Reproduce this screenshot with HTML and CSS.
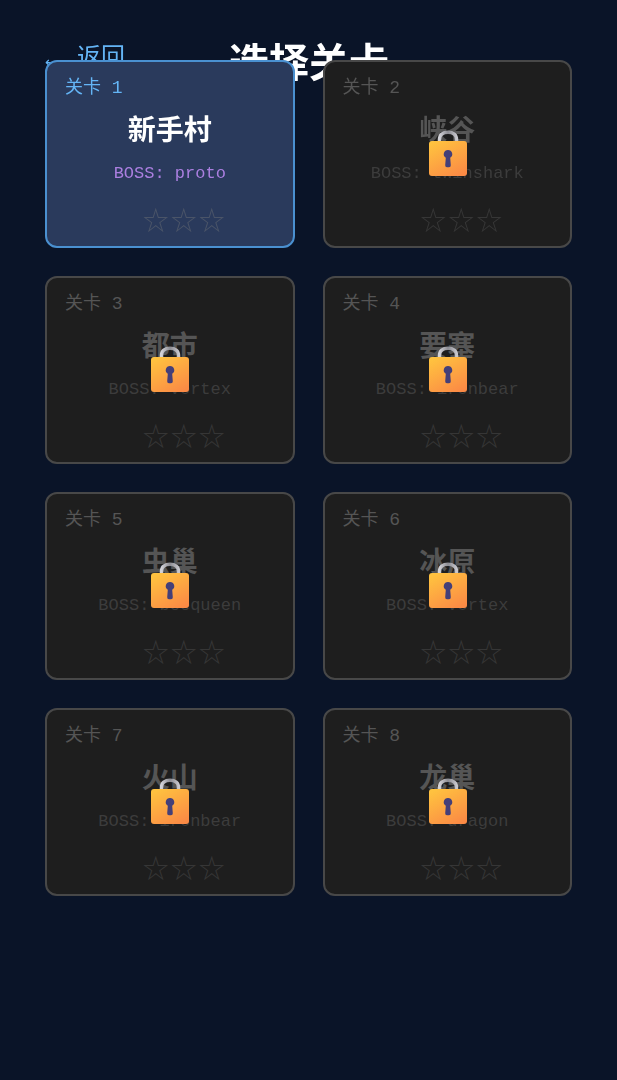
FILE: index.html
```html
<!DOCTYPE html>
<html lang="zh">
<head>
<meta charset="utf-8">
<title>选择关卡</title>
<link rel="stylesheet" href="styles.css">
</head>
<body>
<svg class="defs" width="0" height="0" aria-hidden="true">
  <defs>
    <linearGradient id="lockBody" x1="0.2" y1="0" x2="0.8" y2="1">
      <stop offset="0" stop-color="#ffc23f"/>
      <stop offset="1" stop-color="#fb8a45"/>
    </linearGradient>
    <linearGradient id="lockBar" x1="0" y1="0" x2="1" y2="0">
      <stop offset="0" stop-color="#d2d2d8"/>
      <stop offset="0.5" stop-color="#8c8c92"/>
      <stop offset="1" stop-color="#c6c6cc"/>
    </linearGradient>
    <symbol id="lock" viewBox="0 0 38 46">
      <path d="M10.500 13V9.500C10.500 5 14 2.200 19 2.200s8.500 2.800 8.500 7.300V13" fill="none" stroke="url(#lockBar)" stroke-width="3.500"/>
      <rect x="0" y="11" width="38" height="35" rx="3" fill="url(#lockBody)"/>
      <path d="M19 20a4.200 4.200 0 0 1 2.200 7.800l.6 7.500a1.800 1.800 0 0 1-1.800 1.900h-2a1.800 1.800 0 0 1-1.800-1.900l.6-7.500A4.200 4.200 0 0 1 19 20z" fill="#443f78"/>
    </symbol>
  </defs>
</svg>
<main class="screen">
  <header class="top">
    <a class="back"><span class="back-arrow">←</span><span>返回</span></a>
    <h1 class="heading">选择关卡</h1>
  </header>
  <section class="grid">
    <article class="card current">
      <div class="num">关卡 1</div>
      <div class="name">新手村</div>
      <div class="boss">BOSS: proto</div>
      <div class="stars">☆☆☆</div>
    </article>
    <article class="card locked">
      <div class="num">关卡 2</div>
      <div class="name">峡谷</div>
      <div class="boss">BOSS: twinshark</div>
      <div class="stars">☆☆☆</div>
      <svg class="lock"><use href="#lock"/></svg>
    </article>
    <article class="card locked">
      <div class="num">关卡 3</div>
      <div class="name">都市</div>
      <div class="boss">BOSS: vortex</div>
      <div class="stars">☆☆☆</div>
      <svg class="lock"><use href="#lock"/></svg>
    </article>
    <article class="card locked">
      <div class="num">关卡 4</div>
      <div class="name">要塞</div>
      <div class="boss">BOSS: ironbear</div>
      <div class="stars">☆☆☆</div>
      <svg class="lock"><use href="#lock"/></svg>
    </article>
    <article class="card locked">
      <div class="num">关卡 5</div>
      <div class="name">虫巢</div>
      <div class="boss">BOSS: beequeen</div>
      <div class="stars">☆☆☆</div>
      <svg class="lock"><use href="#lock"/></svg>
    </article>
    <article class="card locked">
      <div class="num">关卡 6</div>
      <div class="name">冰原</div>
      <div class="boss">BOSS: vortex</div>
      <div class="stars">☆☆☆</div>
      <svg class="lock"><use href="#lock"/></svg>
    </article>
    <article class="card locked">
      <div class="num">关卡 7</div>
      <div class="name">火山</div>
      <div class="boss">BOSS: ironbear</div>
      <div class="stars">☆☆☆</div>
      <svg class="lock"><use href="#lock"/></svg>
    </article>
    <article class="card locked">
      <div class="num">关卡 8</div>
      <div class="name">龙巢</div>
      <div class="boss">BOSS: dragon</div>
      <div class="stars">☆☆☆</div>
      <svg class="lock"><use href="#lock"/></svg>
    </article>
  </section>
</main>
</body>
</html>
```
FILE: styles.css
```css
* { box-sizing: border-box; }
html, body { margin: 0; height: 100%; }
body {
  background: #0a1428;
  font-family: "Liberation Mono", "Noto Sans CJK SC", monospace;
  overflow: hidden;
}
.defs { position: absolute; }
.screen {
  padding: 36px 45px 0;
  filter: blur(0.5px);
}
.top {
  display: flex;
  align-items: flex-start;
  height: 24px;
}
.back {
  display: flex;
  align-items: center;
  width: 184px;
  height: 36px;
  color: #64b5f6;
  font-family: "Noto Sans CJK SC", sans-serif;
  font-size: 24px;
}
.back-arrow {
  width: 32px;
  padding-top: 16px;
  font-size: 14px;
  font-family: "DejaVu Sans", sans-serif;
}
.heading {
  margin: 0;
  color: #fff;
  font-family: "Noto Sans CJK SC", sans-serif;
  font-size: 40px;
  line-height: 48px;
  font-weight: 700;
}
.grid {
  display: grid;
  grid-template-columns: 249.5px 249.5px;
  grid-auto-rows: 188px;
  gap: 28px;
  position: relative;
}
.card {
  position: relative;
  border: 2px solid #484848;
  border-radius: 12px;
  background: #1e1e1e;
  padding: 14px 18px 0;
  text-align: center;
}
.card.current {
  border-color: #4a90d0;
  background: #2a3a5c;
}
.num {
  text-align: left;
  font-size: 18px;
  line-height: 24px;
  color: #555;
}
.current .num { color: #64b5f6; }
.name {
  margin-top: 11px;
  font-family: "Noto Sans CJK SC", sans-serif;
  font-size: 28px;
  line-height: 34px;
  font-weight: 700;
  color: #555;
}
.current .name { color: #fff; }
.boss {
  margin-top: 19px;
  font-size: 17px;
  line-height: 20px;
  color: #3c3c3c;
}
.current .boss { color: #ab7fe0; }
.stars {
  margin: 18px 0 0 30px;
  font-family: "Noto Sans CJK SC", sans-serif;
  font-size: 26px;
  line-height: 34px;
  letter-spacing: 2px;
  color: #363636;
}
.current .stars { color: #4a5468; }
.lock {
  position: absolute;
  left: 104px;
  top: 68px;
  width: 38px;
  height: 46px;
}
```
